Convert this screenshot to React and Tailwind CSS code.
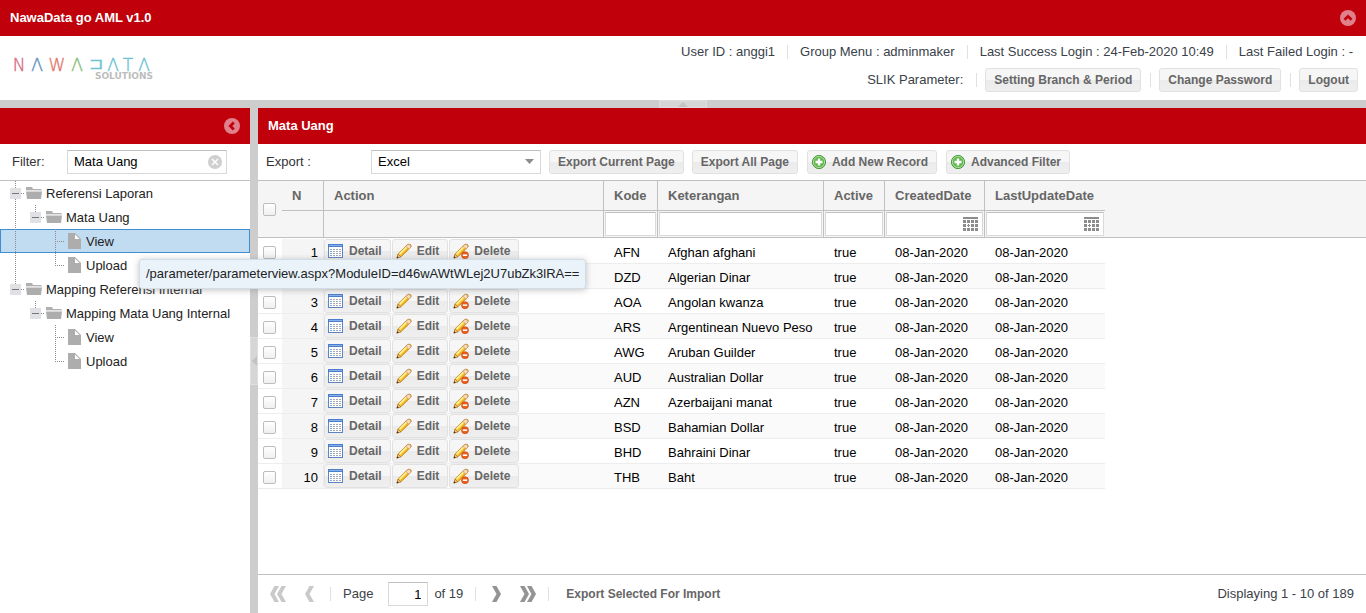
import React from "react";

const ROWS = [
  ["AFN", "Afghan afghani"],
  ["DZD", "Algerian Dinar"],
  ["AOA", "Angolan kwanza"],
  ["ARS", "Argentinean Nuevo Peso"],
  ["AWG", "Aruban Guilder"],
  ["AUD", "Australian Dollar"],
  ["AZN", "Azerbaijani manat"],
  ["BSD", "Bahamian Dollar"],
  ["BHD", "Bahraini Dinar"],
  ["THB", "Baht"],
];

const TREE = [
  { label: "Referensi Laporan", guides: ["box"], folder: true },
  { label: "Mata Uang", guides: ["line", "boxEnd"], folder: true },
  { label: "View", guides: ["line", "blank", "tee"], selected: true },
  { label: "Upload", guides: ["line", "blank", "end"] },
  { label: "Mapping Referensi Internal", guides: ["boxEnd"], folder: true },
  { label: "Mapping Mata Uang Internal", guides: ["blank", "boxEnd"], folder: true },
  { label: "View", guides: ["blank", "blank", "tee"] },
  { label: "Upload", guides: ["blank", "blank", "end"] },
];

function Guide({ kind }) {
  const paths = {
    blank: "",
    line: "M9.5 0V24",
    tee: "M9.5 0V24M11 12.5H18",
    end: "M9.5 0V12M9 12.5H18",
    box: "M9.5 0V24M11 12.5H19",
    boxEnd: "M9.5 0V12M11 12.5H19",
  };
  return (
    <svg width="20" height="24" className="shrink-0" aria-hidden="true">
      <path d={paths[kind]} stroke="#8c8c8c" strokeDasharray="1 1" fill="none" />
      {kind.startsWith("box") && (
        <>
          <rect x="4" y="7" width="11" height="11" fill="#dfe1e5" />
          <path d="M6 12.5H13" stroke="#777" />
        </>
      )}
    </svg>
  );
}

function FolderIcon() {
  return (
    <svg width="16" height="16" className="shrink-0" aria-hidden="true">
      <path d="M0 2h6l1 2h8.500v2H0z" fill="#b0b0b0" />
      <path d="M0 6.500h16L15 14H1z" fill="#adadad" />
      <path d="M0 5.500h15.500" stroke="#e4e4e4" />
    </svg>
  );
}

function PageIcon() {
  return (
    <svg width="16" height="16" className="shrink-0" aria-hidden="true">
      <path d="M2 0h7l6 6v10H2z" fill="#adadad" />
      <path d="M9 1.500V6h4.500z" fill="#fff" />
    </svg>
  );
}

function DetailIcon() {
  return (
    <svg width="16" height="16" viewBox="0 0 16 16" className="shrink-0" aria-hidden="true">
      <rect x="0.500" y="1.500" width="14" height="13" fill="#fff" stroke="#5c83c4" />
      <rect x="0" y="1" width="15" height="3" fill="#4c7dcb" />
      <rect x="1" y="2" width="13" height="1" fill="#86b0ea" />
      <path d="M2 6.500h2M2 8.500h2M2 10.500h2M2 12.500h2" stroke="#7fa8de" />
      <path d="M5 6.500h8M5 8.500h8M5 10.500h8M5 12.500h8" stroke="#a3abb8" strokeDasharray="2 1" />
    </svg>
  );
}

function PencilShape() {
  return (
    <>
      <path d="M1 15l1.200-4.300L10.800 2.200Q13 .4 14.600 1.600T14.200 5L5.300 13.500z" fill="#f6cf3c" stroke="#c08428" strokeWidth=".8" />
      <path d="M3.700 11l7.200-7.200" stroke="#fdf29c" strokeWidth="1.500" />
      <path d="M5.300 12.600l7.200-7.200" stroke="#e9a41e" strokeWidth="1.200" />
      <path d="M10.800 2.300q2-1.500 3.400-.4t0 3L12.900 6.200 9.700 3.300z" fill="#f9dcbc" stroke="#c19163" strokeWidth=".7" />
      <path d="M1 15l1-3.800 3 2.600z" fill="#efc793" stroke="#a26516" strokeWidth=".6" />
      <path d="M.6 15.400l.6-2.200 1.600 1.300z" fill="#4b2b0b" />
    </>
  );
}

function EditIcon() {
  return (
    <svg width="16" height="16" viewBox="0 0 16 16" className="shrink-0" aria-hidden="true">
      <PencilShape />
    </svg>
  );
}

function DeleteIcon() {
  return (
    <svg width="16" height="16" viewBox="0 0 16 16" className="shrink-0" aria-hidden="true">
      <PencilShape />
      <circle cx="12" cy="12.200" r="3.500" fill="#ec5f1c" stroke="#c33f05" strokeWidth=".6" />
      <path d="M9.800 12.200h4.400" stroke="#fff" strokeWidth="1.600" />
    </svg>
  );
}

function AddIcon() {
  return (
    <svg width="16" height="16" viewBox="0 0 16 16" className="shrink-0" aria-hidden="true">
      <circle cx="8" cy="8" r="6.600" fill="#62b84f" stroke="#4b9a3c" />
      <circle cx="8" cy="8" r="5.600" fill="none" stroke="#b4e0a8" strokeWidth=".9" />
      <path d="M8 4.500v7M4.500 8h7" stroke="#fff" strokeWidth="2.400" />
    </svg>
  );
}

function CalendarIcon() {
  return (
    <svg width="16" height="16" viewBox="0 0 16 16" className="shrink-0" aria-hidden="true">
      <path d="M0 2h15" stroke="#8c8c8c" strokeWidth="2" />
      <path d="M0 5.500h15M0 13.500h15" stroke="#8c8c8c" strokeWidth="3" strokeDasharray="3 1" />
      <path d="M0 9.500h3M12 9.500h3M4 9.500h3M8 9.500h3" stroke="#8c8c8c" strokeWidth="3" />
      <path d="M4 8h1v1H4zM6 8h1v1H6zM4 10h1v1H4zM6 10h1v1H6z" fill="#fff" />
    </svg>
  );
}

function CircleTool({ label, d }) {
  return (
    <button type="button" aria-label={label} className="size-4">
      <svg width="16" height="16" viewBox="0 0 16 16" aria-hidden="true">
        <circle cx="8" cy="8" r="8" fill="#e0808a" />
        <path d={d} fill="none" stroke="#c0000a" strokeWidth="2.700" />
      </svg>
    </button>
  );
}

function Chevron({ label, double, flip, disabled }) {
  const fill = disabled ? "#c9c9c9" : "#949494";
  return (
    <button type="button" aria-label={label} disabled={disabled} className="flex w-4 justify-center">
      <svg width="16" height="16" viewBox="0 0 16 16" className={flip ? "rotate-180" : ""} aria-hidden="true">
        {double ? (
          <path d="M4.500 0H9L4.500 8 9 16H4.500L0 8zM11.500 0H16L11.500 8 16 16H11.500L7 8z" fill={fill} />
        ) : (
          <path d="M7.500 0H12L7.500 8 12 16H7.500L3 8z" fill={fill} />
        )}
      </svg>
    </button>
  );
}

function Button({ children, className = "px-2" }) {
  return (
    <button
      type="button"
      className={`flex h-6 items-center rounded-[3px] border border-[#e1e1e1] bg-linear-to-b from-[#f6f6f6] from-50% via-[#ebebeb] via-50% to-[#efefef] text-[12px] font-bold whitespace-nowrap text-[#666] ${className}`}
    >
      {children}
    </button>
  );
}

function Sep({ className = "" }) {
  return <span className={`h-3.5 w-px bg-[#e1e1e1] ${className}`} />;
}

function Logo() {
  return (
    <svg width="142" height="22" viewBox="0 0 142 22" className="overflow-visible" role="img" aria-label="NAWADATA SOLUTIONS">
      <g fontFamily="DejaVu Sans" fontWeight="200" fontSize="17" textAnchor="middle" strokeWidth=".4">
        <text x="7" y="14" fill="#d96c85" stroke="#d96c85">N</text>
        <text x="25" y="14" fill="#5d93bd" stroke="#5d93bd">Λ</text>
        <text x="45" y="14" fill="#e2796a" stroke="#e2796a">W</text>
        <text x="65" y="14" fill="#86c17c" stroke="#86c17c">Λ</text>
        <text x="84" y="12" fill="#6cc3d3" stroke="#6cc3d3">⊐</text>
        <text x="101" y="14" fill="#6cc3d3" stroke="#6cc3d3">Λ</text>
        <text x="116" y="14" fill="#6cc3d3" stroke="#6cc3d3">T</text>
        <text x="132" y="14" fill="#6cc3d3" stroke="#6cc3d3">Λ</text>
      </g>
      <text x="141" y="22" fill="#bdbdbd" fontFamily="DejaVu Sans" fontSize="9" fontWeight="700" textAnchor="end">
        SOLUTIONS
      </text>
    </svg>
  );
}

function Check({ label }) {
  return (
    <input
      type="checkbox"
      aria-label={label}
      className="ml-[5px] block size-[13px] appearance-none rounded-[2px] border border-[#bdbdbd] bg-linear-to-b from-white to-[#f0f0f0]"
    />
  );
}

function FilterCell({ label, date, last }) {
  return (
    <th className={`border-b border-[#c0c0c0] p-px ${last ? "" : "border-r"}`}>
      <div className="flex h-6 items-center border border-[#d9d9d9] border-t-[#c0c0c0] bg-white pr-[3px]">
        <input type="text" aria-label={label} className="h-full w-full min-w-0 px-1 font-normal outline-none" />
        {date && <CalendarIcon />}
      </div>
    </th>
  );
}

function DataGrid() {
  const head = "h-[30px] border-r border-b border-[#c0c0c0] px-2.5 text-left font-bold whitespace-nowrap";
  return (
    <table className="w-full table-fixed border-separate border-spacing-0">
      <colgroup>
        <col className="w-6" />
        <col className="w-[42px]" />
        <col className="w-[280px]" />
        <col className="w-[54px]" />
        <col className="w-[166px]" />
        <col className="w-[61px]" />
        <col className="w-[100px]" />
        <col className="w-[120px]" />
        <col />
      </colgroup>
      <thead className="bg-[#f5f5f5] text-[#666]">
        <tr>
          <th rowSpan={2} className="border-b border-[#c0c0c0]">
            <Check label="Select all" />
          </th>
          <th className={head}>N</th>
          <th className={head}>Action</th>
          <th className={head}>Kode</th>
          <th className={head}>Keterangan</th>
          <th className={head}>Active</th>
          <th className={head}>CreatedDate</th>
          <th className="h-[30px] border-b border-[#c0c0c0] px-2.5 text-left font-bold whitespace-nowrap">LastUpdateDate</th>
          <th rowSpan={2} className="border-b border-[#c0c0c0]" />
        </tr>
        <tr>
          <th className="border-r border-b border-[#c0c0c0]" />
          <th className="border-r border-b border-[#c0c0c0]" />
          <FilterCell label="Filter Kode" />
          <FilterCell label="Filter Keterangan" />
          <FilterCell label="Filter Active" />
          <FilterCell label="Filter CreatedDate" date />
          <FilterCell label="Filter LastUpdateDate" date last />
        </tr>
      </thead>
      <tbody className="text-black [&>tr:first-child>td]:border-t [&>tr:first-child>td]:border-t-white">
        {ROWS.map(([code, name], i) => {
          const bg = i % 2 ? "bg-[#fafafa]" : "bg-white";
          const cell = `h-[25px] border-b border-[#ededed] px-2.5 pt-1 whitespace-nowrap ${bg}`;
          return (
            <tr key={code}>
              <td className="h-[25px] border-b border-[#ededed] bg-white pt-0.5">
                <Check label={`Select ${code}`} />
              </td>
              <td className="border-r border-b border-[#ededed] bg-[#f5f5f5] pt-1 pr-[5px] text-right">{i + 1}</td>
              <td className={`border-b border-[#ededed] ${bg}`}>
                <div className="flex gap-px">
                  <Button className="gap-[5px] pr-2 pl-[3px]">
                    <DetailIcon />
                    Detail
                  </Button>
                  <Button className="gap-[5px] pr-2 pl-[3px]">
                    <EditIcon />
                    Edit
                  </Button>
                  <Button className="gap-[5px] pr-2 pl-[3px]">
                    <DeleteIcon />
                    Delete
                  </Button>
                </div>
              </td>
              <td className={cell}>{code}</td>
              <td className={cell}>{name}</td>
              <td className={cell}>true</td>
              <td className={cell}>08-Jan-2020</td>
              <td className={cell}>08-Jan-2020</td>
              <td />
            </tr>
          );
        })}
      </tbody>
    </table>
  );
}

export default function App() {
  return (
    <div className="relative flex h-screen min-h-0 flex-col bg-[#cdcdcd] font-['Liberation_Sans',Arial,sans-serif] text-[13px] leading-4 text-[#333]">
      <header className="bg-white">
        <div className="flex h-9 items-center justify-between bg-[#c0000a] px-2.5 font-bold text-white">
          <h1>NawaData go AML v1.0</h1>
          <CircleTool label="Collapse header" d="M4.500 9.800L8 6.300l3.500 3.500" />
        </div>
        <div className="flex h-16 items-center justify-between pr-2 pl-3">
          <Logo />
          <div className="flex flex-col items-end gap-2 text-[#3a4148]">
            <div className="flex items-center gap-3 pr-[5px]">
              <span>User ID : anggi1</span>
              <Sep />
              <span>Group Menu : adminmaker</span>
              <Sep />
              <span>Last Success Login : 24-Feb-2020 10:49</span>
              <Sep />
              <span>Last Failed Login : -</span>
            </div>
            <div className="flex items-center gap-2">
              <span className="pr-1">SLIK Parameter:</span>
              <Sep className="ml-px" />
              <Button>Setting Branch &amp; Period</Button>
              <Sep className="ml-px" />
              <Button>Change Password</Button>
              <Sep className="ml-px" />
              <Button>Logout</Button>
            </div>
          </div>
        </div>
      </header>

      <div className="flex h-2 shrink-0 justify-center">
        <button type="button" aria-label="Collapse top panel" className="flex h-2 w-12 items-center justify-center border border-[#dedede] bg-[#d6d6d6]">
          <svg width="10" height="5" aria-hidden="true">
            <path d="M5 0l5 5H0z" fill="#c2c2c2" />
          </svg>
        </button>
      </div>

      <div className="flex min-h-0 flex-1">
        <aside className="w-[250px] shrink-0 bg-white">
          <div className="flex h-9 items-center justify-end bg-[#c0000a] pr-2.5">
            <CircleTool label="Collapse menu" d="M9.800 4.500L6.300 8l3.500 3.500" />
          </div>
          <div className="flex h-[37px] items-center border-b border-[#c0c0c0] pl-3">
            <label htmlFor="filter" className="w-[55px]">Filter:</label>
            <div className="flex h-6 w-40 items-center border border-[#d9d9d9] border-t-[#c0c0c0] pr-1">
              <input id="filter" type="text" defaultValue="Mata Uang" className="w-full min-w-0 px-1.5 text-black outline-none" />
              <button type="button" aria-label="Clear filter" className="shrink-0">
                <svg width="14" height="14" viewBox="0 0 14 14" className="block" aria-hidden="true">
                  <circle cx="7" cy="7" r="7" fill="#cfcfcf" />
                  <path d="M4 4l6 6M10 4l-6 6" stroke="#fff" strokeWidth="1.500" />
                </svg>
              </button>
            </div>
          </div>
          <ul className="text-[#222]">
            {TREE.map((n, i) => (
              <li
                key={i}
                className={`flex h-6 items-center pl-1.5 whitespace-nowrap ${n.selected ? "bg-[#c1dcf1] shadow-[inset_0_0_0_1px_#3f8ecf]" : ""}`}
              >
                {n.guides.map((g, j) => (
                  <Guide key={j} kind={g} />
                ))}
                {n.folder ? <FolderIcon /> : <PageIcon />}
                <a href="#" className="pt-0.5 pl-1">{n.label}</a>
              </li>
            ))}
          </ul>
        </aside>

        <div className="flex w-2 shrink-0 items-center">
          <button type="button" aria-label="Collapse side panel" className="flex h-12 w-2 items-center justify-center border border-[#dedede] bg-[#d6d6d6]">
            <svg width="5" height="10" className="shrink-0" aria-hidden="true">
              <path d="M0 5l5-5v10z" fill="#c2c2c2" />
            </svg>
          </button>
        </div>

        <main className="flex min-w-0 flex-1 flex-col bg-white">
          <div className="flex h-9 shrink-0 items-center bg-[#c0000a] px-2.5 font-bold text-white">
            <h2>Mata Uang</h2>
          </div>
          <div className="flex h-[37px] shrink-0 items-center gap-2 border-b border-[#c0c0c0] pl-2">
            <label htmlFor="export" className="w-[97px]">Export :</label>
            <div className="grid w-[170px] items-center">
              <select
                id="export"
                className="col-start-1 row-start-1 h-6 appearance-none border border-[#d9d9d9] border-t-[#c0c0c0] bg-white px-1.5 text-black"
              >
                <option>Excel</option>
              </select>
              <svg width="10" height="6" className="pointer-events-none col-start-1 row-start-1 mr-1.5 justify-self-end" aria-hidden="true">
                <path d="M0 0h9L4.500 5z" fill="#8c8c8c" />
              </svg>
            </div>
            <Button>Export Current Page</Button>
            <Button>Export All Page</Button>
            <Button className="ml-px gap-[5px] pr-2 pl-[3px]">
              <AddIcon />
              Add New Record
            </Button>
            <Button className="ml-px gap-[5px] pr-2 pl-[3px]">
              <AddIcon />
              Advanced Filter
            </Button>
          </div>
          <div className="min-h-0 flex-1 overflow-hidden">
            <DataGrid />
          </div>
          <footer className="flex h-[39px] shrink-0 items-center justify-between border-t border-[#c0c0c0] px-3 text-[#3a4148]">
            <div className="flex items-center">
              <div className="flex items-center gap-4">
                <Chevron label="First page" double disabled />
                <Chevron label="Previous page" disabled />
                <div className="-ml-1 flex items-center gap-3">
                  <Sep />
                  <label htmlFor="page">Page</label>
                </div>
              </div>
              <input
                id="page"
                type="text"
                defaultValue="1"
                className="mr-1.5 ml-[15px] h-6 w-10 border border-[#d9d9d9] border-t-[#c0c0c0] pr-1.5 text-right text-black"
              />
              <span>of 19</span>
              <div className="ml-3 flex items-center gap-3">
                <Sep />
                <div className="flex gap-4">
                  <Chevron label="Next page" flip />
                  <Chevron label="Last page" double flip />
                </div>
                <Sep />
              </div>
              <button type="button" className="ml-[17px] text-[12px] font-bold text-[#666]">Export Selected For Import</button>
            </div>
            <span>Displaying 1 - 10 of 189</span>
          </footer>
        </main>
      </div>

      <div
        role="tooltip"
        className="absolute top-[259px] left-[139px] rounded-[3px] border border-[#d5dde4] bg-[#eaf3fa] p-1.5 whitespace-nowrap text-[#222] shadow-[0_1px_6px_#8888]"
      >
        /parameter/parameterview.aspx?ModuleID=d46wAWtWLej2U7ubZk3lRA==
      </div>
    </div>
  );
}
